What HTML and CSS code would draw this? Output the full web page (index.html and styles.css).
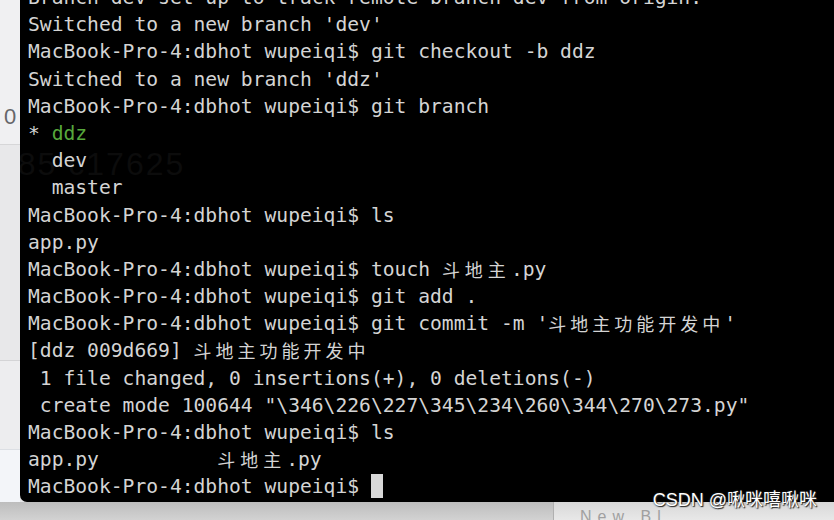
FILE: index.html
```html
<!DOCTYPE html>
<html lang="zh-CN">
<head>
    <meta charset="UTF-8">
    <title>git branch</title>
    <link rel="stylesheet" href="styles.css">
</head>
<body>

    <div class="screen">
        <!-- Strip of the window behind the terminal -->
        <div class="side">
            <div class="side-top"><span class="side-num">0</span></div>
            <div class="side-mid"></div>
            <div class="side-low"></div>
            <div class="side-end"></div>
        </div>

        <div class="terminal">
            <div class="ghost">n85 c17625</div>
            <pre class="output">Branch dev set up to track remote branch dev from origin.
Switched to a new branch 'dev'
MacBook-Pro-4:dbhot wupeiqi$ git checkout -b ddz
Switched to a new branch 'ddz'
MacBook-Pro-4:dbhot wupeiqi$ git branch
* <span class="green">ddz</span>
  dev
  master
MacBook-Pro-4:dbhot wupeiqi$ ls
app.py
MacBook-Pro-4:dbhot wupeiqi$ touch <span class="cjk">斗地主</span>.py
MacBook-Pro-4:dbhot wupeiqi$ git add .
MacBook-Pro-4:dbhot wupeiqi$ git commit -m '<span class="cjk wide">斗地主功能开发中</span>'
[ddz 009d669] <span class="cjk wide">斗地主功能开发中</span>
 1 file changed, 0 insertions(+), 0 deletions(-)
 create mode 100644 "\346\226\227\345\234\260\344\270\273.py"
MacBook-Pro-4:dbhot wupeiqi$ ls
app.py          <span class="cjk">斗地主</span>.py
MacBook-Pro-4:dbhot wupeiqi$ <span class="cursor"></span></pre>
        </div>
    </div>

    <div class="bottom">
        <div class="bottom-left"></div>
        <div class="bottom-right">New Bl... ... ... ..</div>
    </div>

    <div class="watermark">CSDN @啾咪嘻啾咪</div>

</body>
</html>
```

FILE: styles.css
```css
html, body {
    margin: 0;
    height: 520px;
    overflow: hidden;
    background: #e6e6e8;
}
body {
    position: relative;
    font-family: "DejaVu Sans Mono", monospace;
}
.screen {
    display: flex;
    height: 502px;
}
.side {
    width: 20px;
    display: flex;
    flex-direction: column;
    background: #ececee;
}
.side-top {
    height: 145px;
    background: #f0f0f2;
    border-bottom: 1px solid #d6d6d8;
    box-sizing: border-box;
    padding-top: 104px;
    padding-left: 4px;
}
.side-num {
    font-family: "Liberation Sans", sans-serif;
    font-size: 22px;
    color: #66666a;
}
.side-mid {
    height: 215px;
    background: #e8e8ea;
    border-bottom: 1px solid #d4d4d6;
}
.side-low {
    height: 88px;
    background: #ededef;
    border-bottom: 1px solid #dcdfe4;
}
.side-end {
    flex: 1;
    background: #f3f5f9;
}
.terminal {
    flex: 1;
    position: relative;
    background: #000;
    border-bottom-left-radius: 7px;
    overflow: hidden;
    padding-left: 8px;
}
.output {
    position: relative;
    margin: -16px 0 0 0;
    font-family: "DejaVu Sans Mono", "Noto Sans CJK SC", monospace;
    font-size: 19.65px;
    line-height: 27.18px;
    color: #d4d4d4;
}
.green {
    color: #57a83c;
}
.cjk {
    display: inline-block;
    height: 27px;
    line-height: 27px;
    vertical-align: top;
    font-family: "Noto Sans CJK SC", sans-serif;
    font-size: 18px;
    letter-spacing: 5px;
}
.cjk.wide {
    letter-spacing: 4px;
}
.cursor {
    display: inline-block;
    width: 12px;
    height: 24px;
    background: #d8d8d8;
    vertical-align: -5px;
}
.ghost {
    position: absolute;
    left: -22px;
    top: 146px;
    font-family: "Liberation Sans", sans-serif;
    font-size: 32px;
    letter-spacing: 2px;
    color: #0c0c0c;
}
.bottom {
    display: flex;
    height: 18px;
}
.bottom-left {
    width: 553px;
    background: linear-gradient(#bdbdbd, #d2d2d2);
    border-right: 1px solid #b0b0b0;
}
.bottom-right {
    flex: 1;
    background: linear-gradient(#d8d8d8, #e8e8e8);
    font-family: "Liberation Sans", sans-serif;
    font-size: 16px;
    line-height: 30px;
    padding-left: 26px;
    color: #a0a0a0;
    letter-spacing: 6px;
    overflow: hidden;
    white-space: nowrap;
}
.watermark {
    position: absolute;
    right: 17px;
    bottom: 9px;
    font-family: "Liberation Sans", "Noto Sans CJK SC", sans-serif;
    font-size: 18px;
    color: #ffffff;
    text-shadow: 0 0 2px #333, 1px 1px 1px #222;
}
```
